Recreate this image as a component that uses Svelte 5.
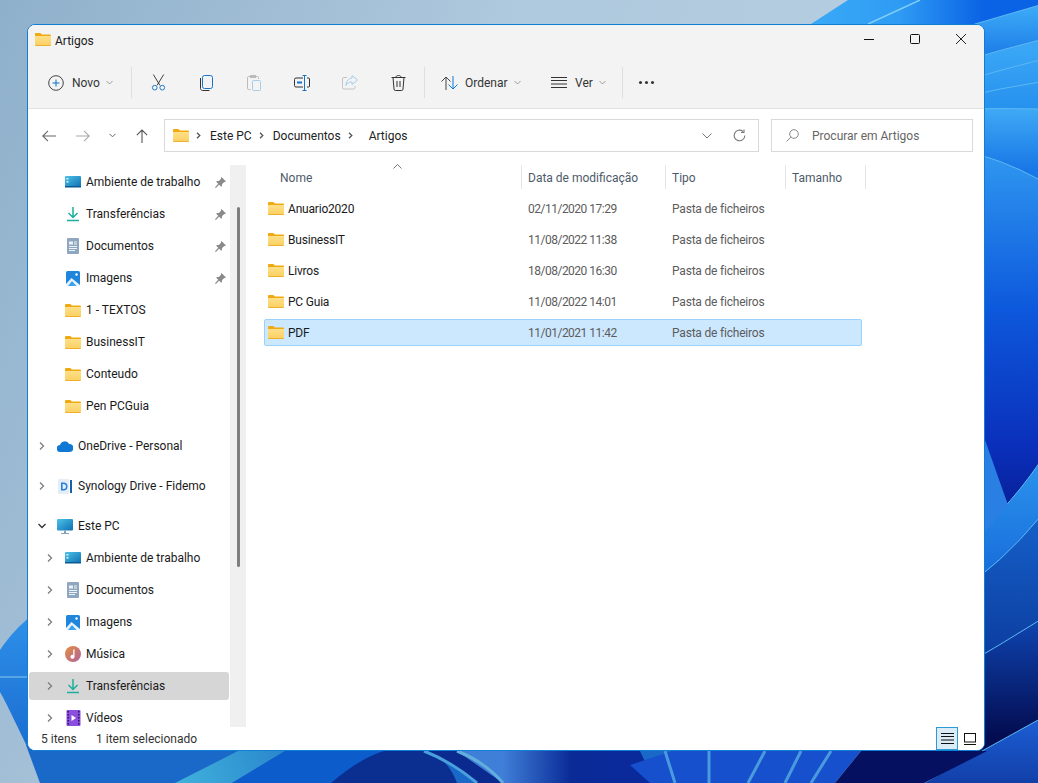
<script>
  const quick = [
    { icon: 'desktop', label: 'Ambiente de trabalho', pin: true },
    { icon: 'download', label: 'Transferências', pin: true },
    { icon: 'docs', label: 'Documentos', pin: true },
    { icon: 'images', label: 'Imagens', pin: true },
    { icon: 'folder', label: '1 - TEXTOS' },
    { icon: 'folder', label: 'BusinessIT' },
    { icon: 'folder', label: 'Conteudo' },
    { icon: 'folder', label: 'Pen PCGuia' }
  ];
  const pc = [
    { icon: 'desktop', label: 'Ambiente de trabalho' },
    { icon: 'docs', label: 'Documentos' },
    { icon: 'images', label: 'Imagens' },
    { icon: 'music', label: 'Música' },
    { icon: 'download', label: 'Transferências', selected: true },
    { icon: 'videos', label: 'Vídeos' }
  ];
  const files = [
    { name: 'Anuario2020', date: '02/11/2020 17:29' },
    { name: 'BusinessIT', date: '11/08/2022 11:38' },
    { name: 'Livros', date: '18/08/2020 16:30' },
    { name: 'PC Guia', date: '11/08/2022 14:01' },
    { name: 'PDF', date: '11/01/2021 11:42', selected: true }
  ];
  // petals on the right edge of the wallpaper, painted top to bottom
  const bands = [
    { d: 'M975 24 1040 5V800H900V60z', id: 'bandA' },
    { d: 'M960 62Q1000 50 1040 40V800H900V80z', id: 'bandB' },
    { d: 'M960 82Q1000 70 1040 60V800H900V100z', id: 'bandB' },
    { d: 'M960 98Q1000 88 1040 82V800H900V110z', id: 'bandB' },
    { d: 'M960 109Q1000 108 1040 109V800H900V110z', id: 'bandE' },
    { d: 'M960 150Q1000 158 1040 180V800H900V150z', id: 'bandF' },
    { d: 'M960 545Q1000 520 1040 462V800H900V560z', id: 'bandH' },
    { d: 'M960 590Q1000 565 1040 517V800H900V610z', id: 'bandI' },
    { d: 'M960 668Q1000 645 1040 620V800H900V690z', id: 'bandJ' },
    { d: 'M924 783 1040 719V800H900z', id: 'bandK' }
  ];
</script>

{#snippet folder(w = 18, h = 15)}
  <svg class="ico" width={w} height={h} viewBox="0 0 16 13">
    <path d="M0 1.2C0 .5.5 0 1.2 0h4l1.8 1.6h7.8c.7 0 1.2.5 1.2 1.2V3H0z" fill="#f0a911" />
    <path d="M0 3h16v8.8c0 .7-.5 1.2-1.2 1.2H1.2C.5 13 0 12.500 0 11.800z" fill="url(#folderFill)" />
    <path d="M0 12h16v-.2c0 .7-.5 1.200-1.200 1.200H1.200C.5 13 0 12.500 0 11.800z" fill="#edb02c" />
  </svg>
{/snippet}

{#snippet navIcon(name)}
  {#if name === 'desktop'}
    <svg class="ico" width="16" height="14" viewBox="0 0 16 14">
      <rect x="0" y="1" width="16" height="11" rx="1" fill="url(#deskFill)" />
      <rect x="1.500" y="3" width="2" height="1.500" fill="#d8f2fb" />
      <rect x="1.500" y="6" width="2" height="1.500" fill="#d8f2fb" />
      <rect x="0" y="11" width="16" height="1.500" fill="#0b5a8f" />
    </svg>
  {:else if name === 'download'}
    <svg class="ico" width="16" height="16" viewBox="0 0 16 16" fill="none" stroke="#1dae9c" stroke-width="1.500">
      <path d="M8 1v10M3.500 7 8 11.500 12.500 7" />
      <path d="M2 14.500h12" />
    </svg>
  {:else if name === 'docs'}
    <svg class="ico" width="14" height="16" viewBox="0 0 14 16">
      <rect x="1" y="0" width="12" height="16" rx="1" fill="#8ea6bf" />
      <path d="M3 3.500h4v3H3zM8 3.500h3v1H8zM8 5.500h3v1H8zM3 8h8v1H3zM3 10h8v1H3zM3 12h6v1H3z" fill="#eef3f8" />
    </svg>
  {:else if name === 'images'}
    <svg class="ico" width="16" height="15" viewBox="0 0 16 15">
      <rect x="1" y="0" width="14" height="15" rx="1.500" fill="#1f86dc" />
      <circle cx="11.500" cy="3.500" r="1.200" fill="#fff" />
      <path d="M1 13 6.500 7l8.500 7v1H1z" fill="#e8f4fd" />
      <path d="M3 15 7 10l4.500 5z" fill="#3ba2ee" />
    </svg>
  {:else if name === 'music'}
    <svg class="ico" width="16" height="16" viewBox="0 0 16 16">
      <defs>
        <linearGradient id="musicFill" x1="0" y1="0" x2="1" y2="1">
          <stop offset="0" stop-color="#e48e3c" />
          <stop offset="1" stop-color="#b0629e" />
        </linearGradient>
      </defs>
      <circle cx="8" cy="8" r="8" fill="url(#musicFill)" />
      <path d="M8.200 3.500h1.300v7.200a2 2 0 1 1-1.300-1.800z" fill="#fff" />
    </svg>
  {:else if name === 'videos'}
    <svg class="ico" width="15" height="16" viewBox="0 0 14 16">
      <rect x="0" y="0" width="14" height="16" rx="1" fill="#8b4fe0" />
      <path d="M1 1h1.500v1.500H1zM1 4h1.500v1.500H1zM1 7h1.500v1.500H1zM1 10h1.500v1.500H1zM1 13h1.500v1.500H1zM11.500 1H13v1.500h-1.500zM11.500 4H13v1.500h-1.500zM11.500 7H13v1.500h-1.500zM11.500 10H13v1.500h-1.500zM11.500 13H13v1.500h-1.500z" fill="#2b1458" />
      <path d="M5 5v6l4.500-3z" fill="#fff" />
    </svg>
  {:else}
    {@render folder(16, 13)}
  {/if}
{/snippet}

{#snippet chevron(open = false)}
  <svg class="chev" width="8" height="8" viewBox="0 0 8 8" fill="none" stroke={open ? '#333' : '#7d7d7d'} stroke-width="1.300">
    {#if open}<path d="M.5 2 4 5.500 7.500 2" />{:else}<path d="M2 .5 5.500 4 2 7.500" />{/if}
  </svg>
{/snippet}

{#snippet crumbSep()}
  <svg class="crumb-sep" width="5" height="7" viewBox="0 0 5 7" fill="none" stroke="#555" stroke-width="1.300"><path d="M1 .7 3.800 3.500 1 6.300" /></svg>
{/snippet}

{#snippet pin()}
  <svg class="pin" width="11" height="11" viewBox="0 0 11 11" fill="#8a8a8a">
    <path d="M6.500 0 11 4.500l-1 .6-.8-.2-2.300 2.300.1 1.800-.8.800-2-2L.8 11 0 10.200l3.200-3.400-2-2 .8-.8 1.800.1 2.300-2.300-.2-.8z" />
  </svg>
{/snippet}

<div class="desktop">
  <svg class="wallpaper" width="1038" height="783" viewBox="0 0 1038 783">
    <defs>
      <linearGradient id="sky" x1="0" y1="0" x2="1" y2="0.3">
        <stop offset="0" stop-color="#8fb0cb" />
        <stop offset="0.45" stop-color="#aec8dd" />
        <stop offset="1" stop-color="#b8d0e3" />
      </linearGradient>
      <linearGradient id="folderFill" x1="0" y1="0" x2="0" y2="1">
        <stop offset="0" stop-color="#fde08a" />
        <stop offset="1" stop-color="#fbcf5f" />
      </linearGradient>
      <linearGradient id="deskFill" x1="0" y1="0" x2="1" y2="1">
        <stop offset="0" stop-color="#4cc3e8" />
        <stop offset="1" stop-color="#0f6fb3" />
      </linearGradient>
      <linearGradient id="topBlue" x1="811" y1="0" x2="985" y2="0" gradientUnits="userSpaceOnUse">
        <stop offset="0" stop-color="#3aa9f6" />
        <stop offset="0.5" stop-color="#2f9cf4" />
        <stop offset="1" stop-color="#0a62e4" />
      </linearGradient>
      <linearGradient id="bandA" x1="0" y1="10" x2="0" y2="60" gradientUnits="userSpaceOnUse">
        <stop offset="0" stop-color="#3ba8f6" />
        <stop offset="1" stop-color="#1a78e6" />
      </linearGradient>
      <linearGradient id="bandB" x1="0" y1="50" x2="0" y2="110" gradientUnits="userSpaceOnUse">
        <stop offset="0" stop-color="#3aa6f5" />
        <stop offset="1" stop-color="#2690ee" />
      </linearGradient>
      <linearGradient id="bandE" x1="0" y1="109" x2="0" y2="170" gradientUnits="userSpaceOnUse">
        <stop offset="0" stop-color="#3fa9f5" />
        <stop offset="1" stop-color="#1877e6" />
      </linearGradient>
      <linearGradient id="bandF" x1="0" y1="155" x2="0" y2="500" gradientUnits="userSpaceOnUse">
        <stop offset="0" stop-color="#2f97f0" />
        <stop offset="0.45" stop-color="#0d58dc" />
        <stop offset="0.85" stop-color="#0a2fba" />
        <stop offset="1" stop-color="#08229c" />
      </linearGradient>
      <linearGradient id="bandH" x1="0" y1="470" x2="0" y2="590" gradientUnits="userSpaceOnUse">
        <stop offset="0" stop-color="#2a90ec" />
        <stop offset="1" stop-color="#1568d8" />
      </linearGradient>
      <linearGradient id="bandI" x1="0" y1="520" x2="0" y2="660" gradientUnits="userSpaceOnUse">
        <stop offset="0" stop-color="#155fc8" />
        <stop offset="1" stop-color="#0c3c9e" />
      </linearGradient>
      <linearGradient id="bandJ" x1="0" y1="625" x2="0" y2="735" gradientUnits="userSpaceOnUse">
        <stop offset="0" stop-color="#0e42ac" />
        <stop offset="1" stop-color="#040d52" />
      </linearGradient>
      <linearGradient id="bandK" x1="0" y1="720" x2="0" y2="783" gradientUnits="userSpaceOnUse">
        <stop offset="0" stop-color="#1c5ed4" />
        <stop offset="1" stop-color="#123fa8" />
      </linearGradient>
      <linearGradient id="leftPetal" x1="0" y1="620" x2="0" y2="750" gradientUnits="userSpaceOnUse">
        <stop offset="0" stop-color="#2d8fe8" />
        <stop offset="1" stop-color="#1b6cd0" />
      </linearGradient>
      <linearGradient id="midDark" x1="503" y1="0" x2="640" y2="0" gradientUnits="userSpaceOnUse">
        <stop offset="0" stop-color="#3f7fd8" />
        <stop offset="0.5" stop-color="#0a2a96" />
        <stop offset="1" stop-color="#0a2a9c" />
      </linearGradient>
      <linearGradient id="cyanBand" x1="180" y1="783" x2="285" y2="751" gradientUnits="userSpaceOnUse">
        <stop offset="0" stop-color="#3fb0dc" />
        <stop offset="1" stop-color="#2a86cc" />
      </linearGradient>
    </defs>
    <rect width="1038" height="783" fill="url(#sky)" />

    <!-- top right corner -->
    <path d="M848 0 811 24V60H1040V0z" fill="url(#topBlue)" />
    <path d="M920 0 868 24" stroke="#7fcdf8" stroke-width="1.500" fill="none" />

    <!-- right edge -->
    {#each bands as band}
      <path d={band.d} fill="url(#{band.id})" stroke="#5cb8f4" stroke-width="1" />
    {/each}
    <path d="M985 440 1008 505 985 532z" fill="#2a80e2" />

    <!-- left edge -->
    <path d="M0 650C10 635 20 625 30 617V752C15 722 8 706 0 692z" fill="url(#leftPetal)" />
    <path d="M0 677H28" stroke="#8ac8ee" stroke-width="1" />

    <!-- bottom edge -->
    <path d="M26 745H850L835 783H40z" fill="#1a68c8" />
    <path d="M238 751H285L232 783H175z" fill="url(#cyanBand)" />
    <path d="M285 751H440V783H232z" fill="#0d5ccc" />
    <path d="M331 783Q375 745 410 748Q445 750 457 783z" fill="#0a2f90" />
    <path d="M424 751Q455 765 477 783H510L457 751z" fill="#0a2a90" />
    <path d="M457 751H640L655 783H503z" fill="url(#midDark)" />
    <path d="M424 751Q452 762 477 783" stroke="#4aa0dc" stroke-width="3" fill="none" />
    <path d="M457 751Q485 762 503 783" stroke="#62aedd" stroke-width="3" fill="none" />
    <path d="M630 765 672 751H861L835 783H650z" fill="#1650cc" />
    <path d="M665 751 675 783M709 751V783M765 751 748 783M801 751 785 783M831 751 811 783" stroke="#4a9ade" stroke-width="3" fill="none" />
    <path d="M861 751 835 783H924L987 751z" fill="#051060" />
  </svg>

  <main class="window">
    <header class="titlebar">
      <div class="title">{@render folder(16, 13)}<span>Artigos</span></div>
      <div class="controls">
        <svg width="10" height="10" viewBox="0 0 10 10" stroke="#111" fill="none"><path d="M0 5.500h10" /></svg>
        <svg width="10" height="10" viewBox="0 0 10 10" stroke="#111" fill="none"><rect x=".5" y=".5" width="9" height="9" rx="1" /></svg>
        <svg width="10" height="10" viewBox="0 0 10 10" stroke="#222" fill="none"><path d="M0 0l10 10M10 0 0 10" /></svg>
      </div>
    </header>

    <div class="toolbar">
      <button class="tool text novo">
        <svg width="16" height="16" viewBox="0 0 16 16" fill="none" stroke="#444">
          <circle cx="8" cy="8" r="7.300" />
          <path d="M8 4.500v7M4.500 8h7" stroke="#0a6fcc" />
        </svg>
        <span>Novo</span>
        <svg class="caret" width="7" height="5" viewBox="0 0 7 5" fill="none" stroke="#999"><path d="M.5 1 3.500 4l3-3" /></svg>
      </button>
      <div class="sep"></div>
      <div class="icons">
        <svg width="15" height="17" viewBox="0 0 16 18" fill="none" stroke="#333">
          <path d="M2.500.5 9.500 12M13.500.5 6.500 12" />
          <circle cx="4" cy="14.500" r="2.500" stroke="#1673c8" />
          <circle cx="12" cy="14.500" r="2.500" stroke="#1673c8" />
        </svg>
        <svg width="13" height="16" viewBox="0 0 13 16" fill="none">
          <rect x="2.500" y=".5" width="10" height="13" rx="2" stroke="#1673c8" />
          <path d="M.5 3v10.500c0 1 1 2 2 2h7" stroke="#333" />
        </svg>
        <svg width="14" height="16" viewBox="0 0 14 16" fill="none" stroke="#bbb">
          <path d="M3.500 14.500h-2a1 1 0 0 1-1-1v-11a1 1 0 0 1 1-1h9a1 1 0 0 1 1 1V4" />
          <rect x="3.500" y=".5" width="5" height="2" />
          <rect x="5.500" y="5.500" width="8" height="10" rx="1" stroke="#a5cdea" />
        </svg>
        <svg width="16" height="16" viewBox="0 0 16 16" fill="none">
          <path d="M9 3H2a1.500 1.500 0 0 0-1.500 1.500v6A1.500 1.500 0 0 0 2 12h7M13 3h1.500a1 1 0 0 1 1 1v7a1 1 0 0 1-1 1H13" stroke="#333" />
          <path d="M8.500.5h4M8.500 15.500h4M10.500.5v15" stroke="#1673c8" />
          <path d="M3 7.500h5" stroke="#1673c8" stroke-width="2" />
        </svg>
        <svg width="16" height="15" viewBox="0 0 16 15" fill="none">
          <path d="M5 2.500H2A1.500 1.500 0 0 0 .5 4v8.500A1.500 1.500 0 0 0 2 14h9.500a1.500 1.500 0 0 0 1.500-1.500V11" stroke="#c4c4c4" />
          <path d="M10 .5 15.500 5 10 9.500V7C7 7 5 8 4 10.500 4 7 6 3.500 10 3z" stroke="#a5cdea" />
        </svg>
        <svg width="15" height="16" viewBox="0 0 15 16" fill="none" stroke="#333">
          <path d="M.5 2.500h14M2 2.500l1 11.500a1.500 1.500 0 0 0 1.500 1.500h6A1.500 1.500 0 0 0 12 14l1-11.500M5 2.500C5 1 6 .5 7.500 .5S10 1 10 2.500M6 6v6M9 6v6" />
        </svg>
      </div>
      <div class="sep"></div>
      <button class="tool text sort">
        <svg width="17" height="14" viewBox="0 0 17 14" fill="none">
          <path d="M5 14V1M.5 5.500 5 1l4.500 4.500" stroke="#444" />
          <path d="M12 0v13M7.500 8.500 12 13l4.500-4.500" stroke="#0a78d7" />
        </svg>
        <span>Ordenar</span>
        <svg class="caret" width="7" height="5" viewBox="0 0 7 5" fill="none" stroke="#999"><path d="M.5 1 3.500 4l3-3" /></svg>
      </button>
      <button class="tool text view">
        <svg width="16" height="11" viewBox="0 0 16 11" fill="none" stroke="#333"><path d="M0 .5h16M0 3.500h16M0 7h16M0 10.500h16" /></svg>
        <span>Ver</span>
        <svg class="caret" width="7" height="5" viewBox="0 0 7 5" fill="none" stroke="#999"><path d="M.5 1 3.500 4l3-3" /></svg>
      </button>
      <div class="sep"></div>
      <div class="more"><i></i><i></i><i></i></div>
    </div>

    <div class="addressrow">
      <div class="nav">
        <svg width="14" height="12" viewBox="0 0 14 12" fill="none" stroke="#666" stroke-width="1.100"><path d="M14 6H1M6 .8 .8 6 6 11.200" /></svg>
        <svg width="14" height="12" viewBox="0 0 14 12" fill="none" stroke="#aaa" stroke-width="1.100"><path d="M0 6h13M8 .8 13.200 6 8 11.200" /></svg>
        <svg width="7" height="5" viewBox="0 0 7 5" fill="none" stroke="#666"><path d="M.5 .8 3.500 3.800l3-3" /></svg>
        <svg width="12" height="14" viewBox="0 0 12 14" fill="none" stroke="#555" stroke-width="1.100"><path d="M6 14V1M.8 6.200 6 1l5.200 5.200" /></svg>
      </div>
      <div class="address">
        {@render folder(16, 13)}
        {@render crumbSep()}<span class="crumb">Este PC</span>
        {@render crumbSep()}<span class="crumb">Documentos</span>
        {@render crumbSep()}<span class="crumb last">Artigos</span>
        <span class="spacer"></span>
        <svg width="10" height="6" viewBox="0 0 10 6" fill="none" stroke="#777"><path d="M.5 .5 5 5 9.500 .5" /></svg>
        <svg class="refresh" width="13" height="13" viewBox="0 0 13 13" fill="none" stroke="#777" stroke-width="1.100">
          <path d="M11.800 6.500A5.300 5.300 0 1 1 10 2.500" />
          <path d="M11 .5v3H8" />
        </svg>
      </div>
      <div class="search">
        <svg width="13" height="13" viewBox="0 0 13 13" fill="none" stroke="#888"><circle cx="8" cy="5" r="4.300" /><path d="M4.800 8.200.5 12.500" /></svg>
        <span>Procurar em Artigos</span>
      </div>
    </div>

    <div class="body">
      <nav class="sidebar">
        <div class="tree">
          <div class="group">
            {#each quick as item}
              <div class="node l2">
                <span class="twist"></span>
                <span class="icon">{@render navIcon(item.icon)}</span>
                <span class="label">{item.label}</span>
                {#if item.pin}{@render pin()}{/if}
              </div>
            {/each}
          </div>
          <div class="node l1">
            <span class="twist">{@render chevron()}</span>
            <span class="icon">
              <svg class="ico" width="16" height="11" viewBox="0 0 16 11">
                <path d="M3.500 11A3.500 3.500 0 0 1 3 4a5 5 0 0 1 9.200-1A4 4 0 0 1 12.500 11z" fill="#0f78d4" />
              </svg>
            </span>
            <span class="label">OneDrive - Personal</span>
          </div>
          <div class="node l1 spaced">
            <span class="twist">{@render chevron()}</span>
            <span class="icon">
              <svg class="ico" width="14" height="15" viewBox="0 0 14 15">
                <rect x="0" y="0" width="11" height="15" rx="1" fill="#e4eef9" />
                <rect x="12" y="1" width="2" height="13" fill="#1a5fa8" />
                <path d="M3 3.500h2.500a4 4 0 0 1 0 8H3zM4.600 5v5h.9a2.500 2.500 0 0 0 0-5z" fill="#2a80d8" />
              </svg>
            </span>
            <span class="label">Synology Drive - Fidemo</span>
          </div>
          <div class="node l1 spaced">
            <span class="twist">{@render chevron(true)}</span>
            <span class="icon">
              <svg class="ico" width="16" height="15" viewBox="0 0 16 15">
                <rect x="0" y="0" width="16" height="11.500" rx="1" fill="url(#deskFill)" />
                <path d="M7 11.500h2V14H7z" fill="#8aa0b4" />
                <path d="M4 14h8v1H4z" fill="#8aa0b4" />
              </svg>
            </span>
            <span class="label">Este PC</span>
          </div>
          {#each pc as item}
            <div class="node l2" class:selected={item.selected}>
              <span class="twist">{@render chevron()}</span>
              <span class="icon">{@render navIcon(item.icon)}</span>
              <span class="label">{item.label}</span>
            </div>
          {/each}
        </div>
        <div class="scrollbar"><div class="thumb"></div></div>
      </nav>

      <section class="content">
        <div class="columns">
          <svg class="sorted" width="9" height="5" viewBox="0 0 9 5" fill="none" stroke="#777"><path d="M.5 4.500 4.500 .5l4 4" /></svg>
          <div class="col name">Nome</div>
          <div class="col date">Data de modificação</div>
          <div class="col type">Tipo</div>
          <div class="col size">Tamanho</div>
        </div>
        <div class="rows">
          {#each files as file}
            <div class="row" class:selected={file.selected}>
              <div class="cell name">{@render folder(16, 13)}<span>{file.name}</span></div>
              <div class="cell date">{file.date}</div>
              <div class="cell type">Pasta de ficheiros</div>
            </div>
          {/each}
        </div>
      </section>
    </div>

    <footer class="status">
      <span class="count">5 itens</span>
      <span class="picked">1 item selecionado</span>
      <span class="spacer"></span>
      <span class="viewbtn active">
        <svg width="13" height="11" viewBox="0 0 13 11" fill="none" stroke="#111"><path d="M0 .5h13M0 3.500h13M0 7h13M0 10.500h13" /></svg>
      </span>
      <span class="viewbtn">
        <svg width="12" height="12" viewBox="0 0 12 12" fill="none" stroke="#111"><rect x=".5" y=".5" width="11" height="8.500" /><path d="M0 11.500h12" /></svg>
      </span>
    </footer>
  </main>
</div>

<style>
  :global(body) {
    margin: 0;
    overflow: hidden;
  }

  .desktop {
    position: relative;
    width: 1038px;
    height: 783px;
    overflow: hidden;
    font-family: Roboto, "Noto Sans", sans-serif;
    font-size: 12px;
    color: #1a1a1a;
  }

  .wallpaper {
    position: absolute;
    inset: 0;
  }

  .window {
    position: absolute;
    left: 27px;
    top: 24px;
    width: 958px;
    height: 727px;
    box-sizing: border-box;
    border: 1px solid #0f7fd6;
    border-radius: 8px;
    background: #fff;
    display: flex;
    flex-direction: column;
    overflow: hidden;
  }

  .ico {
    display: block;
    flex: none;
  }

  .spacer {
    flex: 1;
  }

  .titlebar {
    height: 32px;
    box-sizing: border-box;
    flex: none;
    background: #f3f3f3;
    display: flex;
    align-items: center;
    justify-content: space-between;
    padding: 0 18px 4px 7px;
  }

  .title {
    display: flex;
    align-items: center;
    gap: 4px;
  }

  .title span {
    padding-top: 3px;
  }

  .controls {
    display: flex;
    gap: 36px;
    align-items: center;
  }

  .toolbar {
    height: 51px;
    flex: none;
    background: #f3f3f3;
    border-bottom: 1px solid #e2e2e2;
    display: flex;
    align-items: center;
    padding: 0 0 0 20px;
  }

  .tool {
    all: unset;
    display: flex;
    align-items: center;
    color: #333;
    box-sizing: border-box;
  }

  .tool span {
    margin: 0 6px 0 8px;
    padding-top: 1px;
  }

  .sep {
    width: 1px;
    height: 31px;
    background: #dedede;
  }

  .novo {
    width: 83px;
  }

  .icons {
    display: grid;
    grid-template-columns: repeat(6, 48px);
    justify-items: center;
    align-items: center;
    width: 292px;
    padding-left: 2px;
    box-sizing: border-box;
  }

  .sort {
    width: 110px;
    margin-left: 16px;
  }

  .sort span {
    margin-left: 7px;
  }

  .view {
    width: 71px;
  }

  .more {
    display: flex;
    gap: 3px;
    margin-left: 16px;
  }

  .more i {
    width: 3px;
    height: 3px;
    border-radius: 50%;
    background: #333;
  }

  .addressrow {
    height: 56px;
    flex: none;
    display: flex;
    align-items: center;
    padding-bottom: 3px;
    box-sizing: border-box;
  }

  .nav {
    width: 136px;
    flex: none;
    box-sizing: border-box;
    padding: 0 16px 0 14px;
    display: flex;
    align-items: center;
    justify-content: space-between;
  }

  .address {
    width: 595px;
    height: 33px;
    box-sizing: border-box;
    border: 1px solid #d9d9d9;
    display: flex;
    align-items: center;
    padding: 0 12px 0 8px;
    color: #222;
  }

  .crumb-sep {
    flex: none;
    margin: 0 9px 0 7px;
  }

  .crumb {
    white-space: nowrap;
  }

  .crumb.last {
    margin-left: 7px;
  }

  .refresh {
    margin-left: 21px;
  }

  .search {
    width: 202px;
    height: 33px;
    box-sizing: border-box;
    margin-left: 12px;
    border: 1px solid #d9d9d9;
    display: flex;
    align-items: center;
    gap: 13px;
    padding-left: 14px;
    color: #666;
  }

  .body {
    flex: 1;
    min-height: 0;
    display: flex;
  }

  .sidebar {
    width: 218px;
    flex: none;
    display: flex;
    overflow: hidden;
  }

  .tree {
    width: 202px;
    flex: none;
    padding: 1px 1px 0 1px;
    box-sizing: border-box;
  }

  .group {
    padding-bottom: 8px;
  }

  .node {
    height: 32px;
    display: flex;
    align-items: center;
    color: #1a1a1a;
    white-space: nowrap;
    position: relative;
  }

  .node .twist {
    display: flex;
    align-items: center;
    justify-content: center;
    flex: none;
  }

  .l1 .twist {
    width: 8px;
    margin: 0 11px 0 9px;
  }

  .l2 .twist {
    width: 8px;
    margin: 0 11px 0 17px;
  }

  .node .icon {
    width: 16px;
    flex: none;
    display: flex;
    justify-content: center;
  }

  .node .label {
    margin-left: 5px;
  }

  .spaced {
    margin-top: 8px;
  }

  .node.selected::before {
    content: "";
    position: absolute;
    left: 0;
    right: 0;
    top: 2px;
    bottom: 2px;
    border-radius: 3px;
    background: #d6d6d6;
  }

  .node.selected > * {
    position: relative;
  }

  .pin {
    position: absolute;
    right: 3px;
    top: 11px;
  }

  .scrollbar {
    width: 16px;
    flex: none;
    background: #f0f0f0;
    position: relative;
  }

  .thumb {
    position: absolute;
    left: 7px;
    top: 42px;
    width: 3px;
    height: 360px;
    background: #7e7e7e;
    border-radius: 2px;
  }

  .content {
    flex: 1;
    min-width: 0;
    padding-left: 18px;
    color: #5c5c5c;
  }

  .columns {
    height: 24px;
    display: flex;
    position: relative;
  }

  .sorted {
    position: absolute;
    left: 129px;
    top: -1px;
  }

  .col {
    box-sizing: border-box;
    border-right: 1px solid #e5e5e5;
    padding: 6px 0 0 6px;
    color: #4d5a6a;
  }

  .col.name {
    width: 258px;
    padding-left: 16px;
  }

  .col.date {
    width: 144px;
  }

  .col.type {
    width: 120px;
  }

  .col.size {
    width: 80px;
  }

  .rows {
    margin-top: 6px;
    display: flex;
    flex-direction: column;
    gap: 4px;
  }

  .row {
    height: 27px;
    width: 598px;
    box-sizing: border-box;
    display: flex;
    align-items: center;
    border: 1px solid transparent;
    border-radius: 2px;
  }

  .row.selected {
    background: #cce8ff;
    border-color: #99d1ff;
  }

  .cell.name {
    width: 256px;
    box-sizing: border-box;
    padding-left: 3px;
    display: flex;
    align-items: center;
    gap: 4px;
    color: #1a1a1a;
    letter-spacing: -0.2px;
  }

  .cell.date {
    width: 144px;
    box-sizing: border-box;
    padding-left: 7px;
    letter-spacing: -0.5px;
  }

  .cell.type {
    padding-left: 7px;
    letter-spacing: -0.2px;
  }

  .status {
    height: 23px;
    flex: none;
    display: flex;
    align-items: center;
    padding: 0 3px 0 13px;
    color: #333;
    background: #fff;
  }

  .count {
    width: 55px;
  }

  .viewbtn {
    width: 22px;
    height: 23px;
    box-sizing: border-box;
    display: flex;
    align-items: center;
    justify-content: center;
  }

  .viewbtn.active {
    background: #dcecf7;
    border: 1px solid #2b9bd8;
    margin-right: 1px;
  }
</style>
